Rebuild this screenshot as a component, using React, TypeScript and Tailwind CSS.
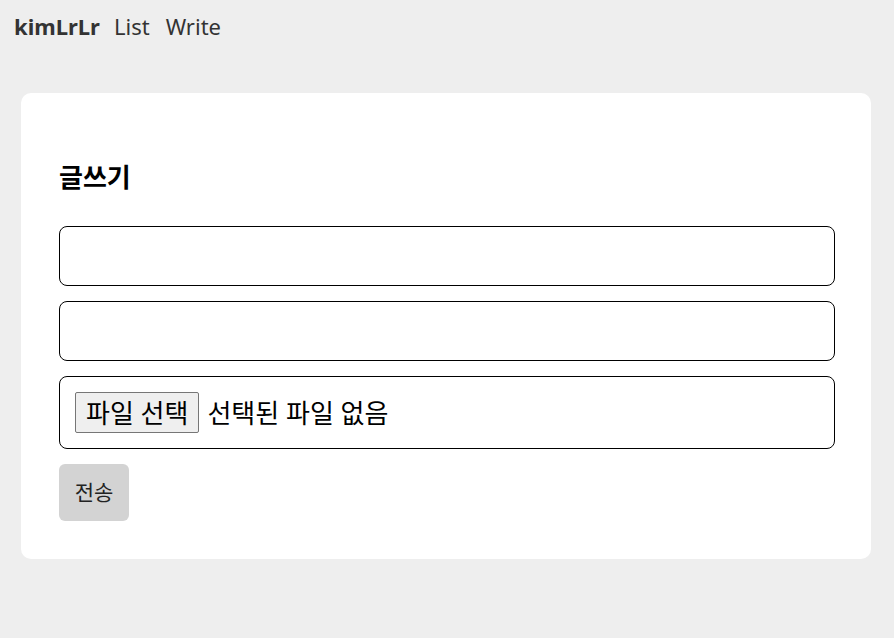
export default function App() {
  return (
    <div
      className="min-h-screen bg-[#eeeeee] text-black"
      style={{ fontFamily: '"Noto Sans", "Noto Sans CJK KR", sans-serif' }}
    >
      <nav className="flex h-[53px] items-center px-[14px] text-[22px] text-[#333]">
        <span className="font-bold">kimLrLr</span>
        <span className="ml-[14px]">List</span>
        <span className="ml-[16px]">Write</span>
      </nav>

      <div className="mx-[21px] mt-[40px] w-[850px] rounded-[10px] bg-white pl-[38px] pr-[36px] pt-[66px] pb-[38px]">
        <h4 className="text-[26px] font-bold leading-[36px]">글쓰기</h4>

        <div className="mt-[31px] flex flex-col gap-[15px]">
          <input className="h-[60px] w-full rounded-[8px] border border-black px-3 text-[20px] outline-none" />
          <input className="h-[60px] w-full rounded-[8px] border border-black px-3 text-[20px] outline-none" />
          <div className="flex h-[73px] w-full items-center rounded-[8px] border border-black px-[15px] text-[26px]">
            <span className="flex h-[41px] items-center rounded-[2px] border border-[#767676] bg-[#efefef] px-[10px] leading-none">
              파일 선택
            </span>
            <span className="ml-[8px] leading-none">선택된 파일 없음</span>
          </div>
          <div>
            <button className="h-[57px] w-[70px] rounded-[6px] bg-[#d3d3d3] text-[21px] text-[#222]">
              전송
            </button>
          </div>
        </div>
      </div>
    </div>
  )
}
